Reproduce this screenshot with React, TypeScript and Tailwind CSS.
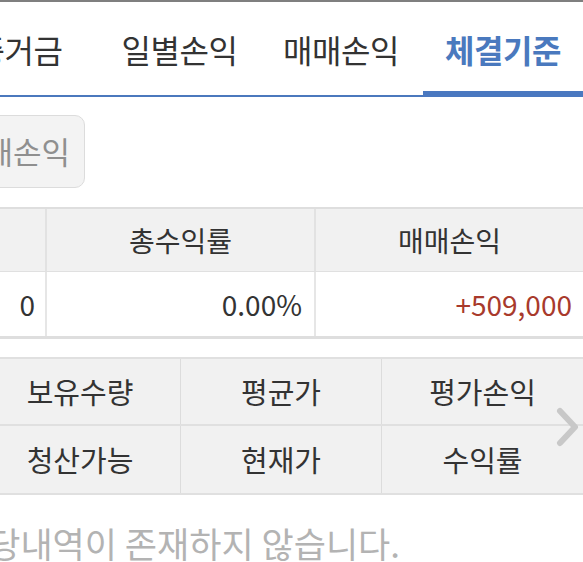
import React from 'react';

const font = { fontFamily: '"Noto Sans CJK KR", "Noto Sans", sans-serif' };

const tabs = [
  { label: '증거금', w: 'w-[162px]' },
  { label: '일별손익', w: 'w-[159px]' },
  { label: '매매손익', w: 'w-[164px]' },
  { label: '체결기준', w: 'w-[160px]', active: true },
];

export default function App() {
  return (
    <div className="w-[583px] h-[562px] bg-white overflow-hidden relative" style={font}>
      {/* top edge */}
      <div className="h-[2px] bg-[#7f7f7f]" />

      {/* Tab bar */}
      <div className="relative h-[95px] border-b-[2px] border-[#4b78bd]">
        <div className="flex ml-[-62px] h-full">
          {tabs.map((t) => (
            <div
              key={t.label}
              className={`${t.w} shrink-0 flex items-center justify-center relative ${
                t.active ? 'text-[#4a79be] font-bold' : 'text-[#333333]'
              } text-[32px] tracking-[-0.5px]`}
            >
              <span>{t.label}</span>
              {t.active && <div className="absolute left-0 right-0 bottom-[-2px] h-[6px] bg-[#4a78c0]" />}
            </div>
          ))}
        </div>
      </div>

      {/* Sub button */}
      <div className="pt-[18px] h-[110px]">
        <div className="ml-[-58px] w-[143px] h-[73px] rounded-[10px] bg-[#f3f3f3] border border-[#dcdcdc] flex items-center justify-end pr-[14px] text-[31px] text-[#8f8f8f]">
          매매손익
        </div>
      </div>

      {/* Summary table */}
      <div className="ml-[-220px] w-[803px] border-t-[2px] border-b-[3px] border-[#dedede]">
        <div className="grid grid-cols-[267px_269px_267px] h-[63px] bg-[#f1f1f1] border-b border-[#e0e0e0] text-[28px] text-[#333333]">
          <div className="border-r-[2px] border-[#e2e2e2]" />
          <div className="flex items-center justify-center border-r-[2px] border-[#e2e2e2]">총수익률</div>
          <div className="flex items-center justify-center">매매손익</div>
        </div>
        <div className="grid grid-cols-[267px_269px_267px] h-[64px] bg-white text-[28px] text-[#333333]">
          <div className="flex items-center justify-end pr-[10px] border-r-[2px] border-[#e6e6e6]">0</div>
          <div className="flex items-center justify-end pr-[12px] border-r-[2px] border-[#e6e6e6]">0.00%</div>
          <div className="flex items-center justify-end pr-[11px] text-[#a83a2c]">+509,000</div>
        </div>
      </div>

      {/* Holdings header */}
      <div className="relative mt-[18px] ml-[-20px] w-[603px] border-t-[2px] border-b-[2px] border-[#e0e0e0] bg-[#f1f1f1] text-[29px] text-[#333333]">
        <div className="grid grid-cols-[201px_201px_201px] h-[67px] border-b-[2px] border-[#e0e0e0]">
          <div className="flex items-center justify-center border-r border-[#dcdcdc]">보유수량</div>
          <div className="flex items-center justify-center border-r border-[#dcdcdc]">평균가</div>
          <div className="flex items-center justify-center">평가손익</div>
        </div>
        <div className="grid grid-cols-[201px_201px_201px] h-[67px]">
          <div className="flex items-center justify-center border-r border-[#dcdcdc]">청산가능</div>
          <div className="flex items-center justify-center border-r border-[#dcdcdc]">현재가</div>
          <div className="flex items-center justify-center">수익률</div>
        </div>
        <svg
          className="absolute right-[3px] top-[48px]"
          width="24"
          height="40"
          viewBox="0 0 24 40"
          fill="none"
        >
          <polyline
            points="4,4 19,20 4,36"
            stroke="#c8c8c8"
            strokeWidth="6"
            strokeLinecap="round"
            strokeLinejoin="round"
          />
        </svg>
      </div>

      {/* Empty message */}
      <div className="mt-[22px] ml-[-44px] whitespace-nowrap text-[35px] text-[#b3b3b3]">
        해당내역이 존재하지 않습니다.
      </div>
    </div>
  );
}
